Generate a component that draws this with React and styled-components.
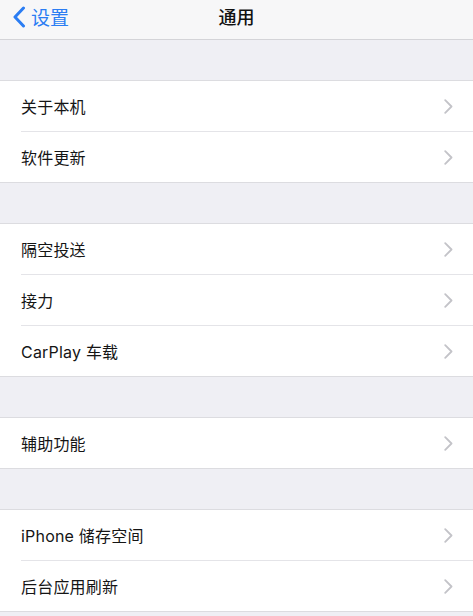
import styled, { createGlobalStyle } from "styled-components";

const GlobalStyle = createGlobalStyle`
  html, body {
    margin: 0;
    padding: 0;
    background: #efeff4;
  }
  body {
    font-family: Inter, "Noto Sans CJK SC", sans-serif;
    -webkit-font-smoothing: antialiased;
  }
`;

const Page = styled.div`
  min-height: 100vh;
  background: #efeff4;
`;

const NavBar = styled.header`
  height: 39px;
  background: #f7f7f8;
  border-bottom: 1px solid #d4d4d8;
  display: grid;
  grid-template-columns: 1fr auto 1fr;
  align-items: center;
`;

const BackButton = styled.button`
  justify-self: start;
  display: flex;
  align-items: center;
  gap: 5px;
  padding: 0 0 6px 12px;
  border: 0;
  background: none;
  color: #2b7df3;
  font-family: inherit;
  font-size: 19px;
  cursor: pointer;
`;

const Title = styled.h1`
  margin: 0 0 7px;
  font-size: 18px;
  font-weight: 500;
  color: #111;
`;

const Group = styled.section`
  margin-top: 40px;
  background: #fff;
  border-top: 1px solid #dcdce0;
  border-bottom: 1px solid #dcdce0;
`;

const Row = styled.div`
  height: 50px;
  display: flex;
  align-items: center;
  padding-left: 21px;

  & + & {
    border-top: 1px solid #e4e4e8;
    margin-left: 21px;
    padding-left: 0;
  }
`;

const Label = styled.span`
  flex: 1;
  font-size: 16px;
  color: #151515;
  letter-spacing: 0.2px;
  margin-top: -1px;
`;

const Chevron = styled.svg`
  width: 9px;
  height: 15px;
  margin-right: 20px;
  flex: none;
`;

function Arrow() {
  return (
    <Chevron viewBox="0 0 9 15">
      <path d="M1.2 1.2 L7.5 7.5 L1.2 13.8" fill="none" stroke="#c3c3c8" strokeWidth="1.8" strokeLinecap="round" strokeLinejoin="round" />
    </Chevron>
  );
}

const groups = [
  ["关于本机", "软件更新"],
  ["隔空投送", "接力", "CarPlay 车载"],
  ["辅助功能"],
  ["iPhone 储存空间", "后台应用刷新"],
];

export default function App() {
  return (
    <Page>
      <GlobalStyle />
      <NavBar>
        <BackButton>
          <svg width="14" height="22" viewBox="0 0 14 22">
            <path d="M11.5 2 L3 11 L11.5 20" fill="none" stroke="#2b7df3" strokeWidth="3" strokeLinecap="round" strokeLinejoin="round" />
          </svg>
          设置
        </BackButton>
        <Title>通用</Title>
        <span />
      </NavBar>
      {groups.map((items, i) => (
        <Group key={i}>
          {items.map((label) => (
            <Row key={label}>
              <Label>{label}</Label>
              <Arrow />
            </Row>
          ))}
        </Group>
      ))}
    </Page>
  );
}
